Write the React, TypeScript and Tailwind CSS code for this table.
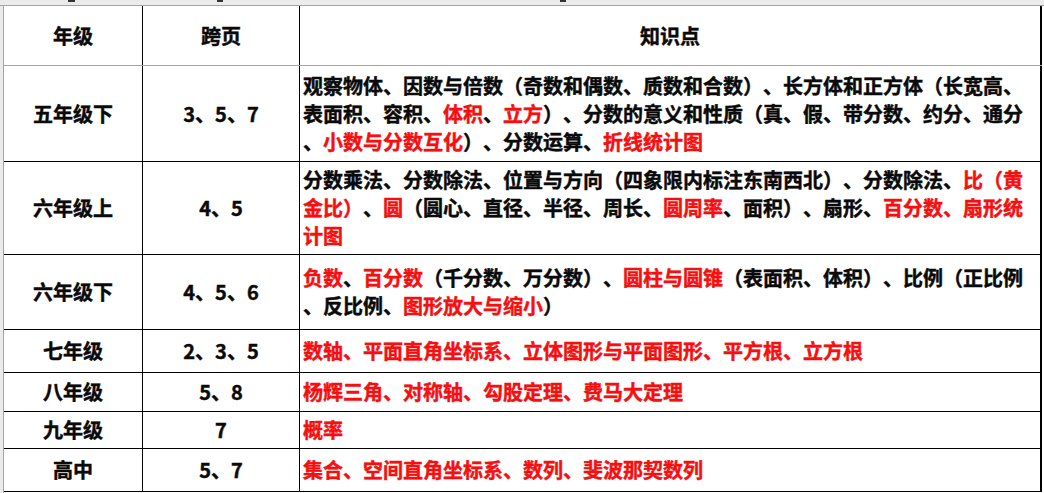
import React from "react";

type Seg = { t: string; red?: boolean };

const r = (t: string): Seg => ({ t, red: true });
const b = (t: string): Seg => ({ t });

type Row = {
  grade: string;
  pages: string;
  lines: Seg[][];
  h: string;
};

// knowledge points by grade, line breaks kept as in the sheet
const rows: Row[] = [
  {
    grade: "五年级下",
    pages: "3、5、7",
    h: "h-[96px]",
    lines: [
      [b("观察物体、因数与倍数（奇数和偶数、质数和合数）、长方体和正方体（长宽高、")],
      [b("表面积、容积、"), r("体积"), b("、"), r("立方"), b("）、分数的意义和性质（真、假、带分数、约分、通分")],
      [b("、"), r("小数与分数互化"), b("）、分数运算、"), r("折线统计图")],
    ],
  },
  {
    grade: "六年级上",
    pages: "4、5",
    h: "h-[93px]",
    lines: [
      [b("分数乘法、分数除法、位置与方向（四象限内标注东南西北）、分数除法、"), r("比（黄")],
      [r("金比）"), b("、"), r("圆"), b("（圆心、直径、半径、周长、"), r("圆周率"), b("、面积）、扇形、"), r("百分数、扇形统")],
      [r("计图")],
    ],
  },
  {
    grade: "六年级下",
    pages: "4、5、6",
    h: "h-[75px]",
    lines: [
      [r("负数"), b("、"), r("百分数"), b("（千分数、万分数）、"), r("圆柱与圆锥"), b("（表面积、体积）、比例（正比例")],
      [b("、反比例、"), r("图形放大与缩小"), b("）")],
    ],
  },
  {
    grade: "七年级",
    pages: "2、3、5",
    h: "h-[43px]",
    lines: [[r("数轴、平面直角坐标系、立体图形与平面图形、平方根、立方根")]],
  },
  {
    grade: "八年级",
    pages: "5、8",
    h: "h-[39px]",
    lines: [[r("杨辉三角、对称轴、勾股定理、费马大定理")]],
  },
  {
    grade: "九年级",
    pages: "7",
    h: "h-[37px]",
    lines: [[r("概率")]],
  },
  {
    grade: "高中",
    pages: "5、7",
    h: "h-[43px]",
    lines: [[r("集合、空间直角坐标系、数列、斐波那契数列")]],
  },
];

function Cell({
  children,
  className = "",
}: {
  children: React.ReactNode;
  className?: string;
}) {
  return <div className={`flex items-center ${className}`}>{children}</div>;
}

export default function App() {
  return (
    <div
      className="w-[1044px] h-[493px] overflow-hidden bg-white text-[#0a0a0a] font-bold text-[20px] [text-spacing-trim:space-all] [-webkit-text-stroke:0.45px_currentColor]"
      style={{ fontFamily: '"Noto Sans CJK SC", "Noto Sans", sans-serif' }}
    >
      {/* cut-off spreadsheet row above */}
      <div className="h-[6px] bg-[#ebebeb] border-b border-[#a3a3a3] flex items-start">
        <div className="ml-[68px] w-[7px] h-[2px] bg-[#333]" />
        <div className="ml-[142px] w-[6px] h-[2px] bg-[#333]" />
        <div className="ml-[337px] w-[6px] h-[2px] bg-[#333]" />
      </div>
      <div className="flex">
        <div className="w-[4px] h-[487px] bg-[#ebebeb] border-r border-[#a3a3a3]" />
        <div className="flex flex-col">
          {/* header */}
          <div className="flex h-[60px] border-b border-[#a3a3a3]">
            <Cell className="w-[139px] justify-center border-r border-black">年级</Cell>
            <Cell className="w-[157px] justify-center border-r border-black">跨页</Cell>
            <Cell className="w-[742px] justify-center border-r-2 border-black">知识点</Cell>
          </div>
          {rows.map((row) => (
            <div key={row.grade} className={`flex border-b border-black ${row.h}`}>
              <Cell className="w-[139px] justify-center border-r border-black">{row.grade}</Cell>
              <Cell className="w-[157px] justify-center border-r border-black">{row.pages}</Cell>
              <Cell className="w-[742px] pl-[3px] border-r-2 border-black">
                <div className="flex flex-col leading-[28px] whitespace-nowrap">
                  {row.lines.map((line, i) => (
                    <div key={i}>
                      {line.map((s, j) => (
                        <span key={j} className={s.red ? "text-[#f50f0f]" : ""}>
                          {s.t}
                        </span>
                      ))}
                    </div>
                  ))}
                </div>
              </Cell>
            </div>
          ))}
        </div>
      </div>
    </div>
  );
}
